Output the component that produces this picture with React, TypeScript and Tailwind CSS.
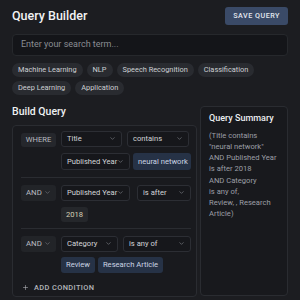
import React from "react";
import { ChevronDown, Plus } from "lucide-react";

const tags = [
  "Machine Learning",
  "NLP",
  "Speech Recognition",
  "Classification",
  "Deep Learning",
  "Application",
];

function Select({ label, className = "" }: { label: string; className?: string }) {
  return (
    <div
      className={`flex items-center justify-between h-[16px] px-[5px] rounded-[3px] border border-[#2c2e34] bg-[#16171b] text-[7.6px] text-[#d3d5d8] ${className}`}
    >
      <span className="whitespace-nowrap">{label}</span>
      <ChevronDown className="w-[7px] h-[7px] text-[#85888f] shrink-0" strokeWidth={2} />
    </div>
  );
}

function OpSelect({ label }: { label: string }) {
  return (
    <div className="flex items-center justify-between w-[35px] h-[16px] px-[5px] rounded-[3px] bg-[#222428] text-[7.8px] text-[#b9bbc0]">
      <span>{label}</span>
      <ChevronDown className="w-[7px] h-[7px] text-[#7d8087]" strokeWidth={2} />
    </div>
  );
}

function ValueChip({ label, className = "" }: { label: string; className?: string }) {
  return (
    <div
      className={`flex items-center whitespace-nowrap h-[16px] px-[5px] rounded-[3px] bg-[#263246] text-[7.6px] text-[#ccd5e4] ${className}`}
    >
      {label}
    </div>
  );
}

export default function App() {
  return (
    <div
      className="w-[300px] h-[300px] overflow-hidden bg-[#1c1d21] px-[12px] pt-[7px]"
      style={{ fontFamily: "Roboto, 'Liberation Sans', sans-serif" }}
    >
      {/* Header */}
      <div className="flex items-center justify-between">
        <h1 className="text-[12.5px] font-medium text-[#f1f2f4]">Query Builder</h1>
        <button className="h-[18px] px-[8px] rounded-[3px] bg-[#3a4a67] text-[7.2px] font-medium tracking-[0.5px] text-[#e4e8ef]">
          SAVE QUERY
        </button>
      </div>

      {/* Search */}
      <div className="mt-[8px] h-[22px] flex items-center px-[8px] rounded-[4px] border border-[#26282c] bg-[#141519] text-[9px] text-[#8a8d93]">
        Enter your search term...
      </div>

      {/* Tags */}
      <div className="mt-[7px] flex flex-wrap gap-x-[4px] gap-y-[4px]">
        {tags.map((t) => (
          <span
            key={t}
            className="h-[14px] flex items-center px-[6px] rounded-full bg-[#292b30] text-[7.4px] text-[#cdcfd3]"
          >
            {t}
          </span>
        ))}
      </div>

      {/* Builder */}
      <div className="mt-[11px] flex gap-[3px] items-start">
        <div className="flex-1">
          <h2 className="text-[10.5px] font-medium text-[#eef0f2] leading-[12px]">Build Query</h2>
          <div className="mt-[7px] rounded-[4px] border border-[#2a2c31] bg-[#191a1e] pl-[8px] pr-[5px] pt-[5px] pb-[6px] h-[172px]">
            {/* WHERE row */}
            <div className="flex gap-[5px] pb-[7px] border-b border-[#2a2c31]">
              <div className="w-[35px] h-[14px] mt-[2px] flex items-center justify-center rounded-[3px] bg-[#25272c] text-[7.6px] text-[#b9bbc0]">
                WHERE
              </div>
              <div className="flex-1 flex flex-col gap-[6px]">
                <div className="flex gap-[5px]">
                  <Select label="Title" className="w-[61px]" />
                  <Select label="contains" className="w-[62px]" />
                </div>
                <div className="flex gap-[3px]">
                  <Select label="Published Year" className="w-[69px] h-[17px]" />
                  <ValueChip label="neural network" className="w-[58px] h-[17px]" />
                </div>
              </div>
            </div>

            {/* AND published year */}
            <div className="flex gap-[5px] pt-[7px] pb-[6px] border-b border-[#2a2c31]">
              <OpSelect label="AND" />
              <div className="flex-1 flex flex-col gap-[6px]">
                <div className="flex gap-[7px]">
                  <Select label="Published Year" className="w-[69px]" />
                  <Select label="is after" className="w-[54px]" />
                </div>
                <div className="flex">
                  <div className="h-[15px] px-[5px] flex items-center rounded-[3px] bg-[#25272b] text-[7.6px] text-[#d6d1b6]">
                    2018
                  </div>
                </div>
              </div>
            </div>

            {/* AND category */}
            <div className="flex gap-[5px] pt-[7px]">
              <OpSelect label="AND" />
              <div className="flex-1 flex flex-col gap-[5px]">
                <div className="flex gap-[5px]">
                  <Select label="Category" className="w-[57px]" />
                  <Select label="is any of" className="w-[68px]" />
                </div>
                <div className="flex gap-[3px]">
                  <ValueChip label="Review" className="h-[15px]" />
                  <ValueChip label="Research Article" className="h-[15px]" />
                </div>
              </div>
            </div>

            <button className="mt-[9px] ml-[1px] flex items-center gap-[5px] text-[7.4px] font-medium tracking-[0.4px] text-[#b3b5ba]">
              <Plus className="w-[7px] h-[7px]" strokeWidth={2} />
              ADD CONDITION
            </button>
          </div>
        </div>

        {/* Summary */}
        <div className="w-[90px] h-[190px] rounded-[4px] border border-[#2a2c31] bg-[#18191d] pl-[8px] pr-[3px] pt-[5px]">
          <h3 className="text-[9px] font-medium text-[#eceef1] leading-[12px]">Query Summary</h3>
          <p className="mt-[6px] text-[7.6px] leading-[11.2px] text-[#9c9fa6] whitespace-nowrap">
            (Title contains
            <br />
            "neural network"
            <br />
            AND Published Year
            <br />
            is after 2018
            <br />
            AND Category
            <br />
            is any of,
            <br />
            Review, , Research
            <br />
            Article)
          </p>
        </div>
      </div>
    </div>
  );
}
